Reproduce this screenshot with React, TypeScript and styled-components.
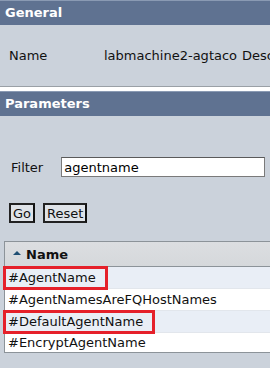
import React from "react";
import styled, { createGlobalStyle } from "styled-components";

const GlobalStyle = createGlobalStyle`
  html, body {
    margin: 0;
    padding: 0;
    background: #ffffff;
    overflow: hidden;
  }
  body {
    font-family: "DejaVu Sans", Verdana, sans-serif;
    font-size: 13px;
    color: #111;
  }
`;

const Page = styled.div`
  width: 270px;
  height: 368px;
  overflow: hidden;
  display: flex;
  flex-direction: column;
`;

const Panel = styled.section<{ $grow?: boolean }>`
  display: flex;
  flex-direction: column;
  background: #cbd2db;
  flex: ${p => (p.$grow ? "1" : "none")};
`;

const PanelHeader = styled.div`
  height: 25px;
  background: #5f7291;
  border-top: 1px solid #8a9ab3;
  box-sizing: border-box;
  color: #fff;
  font-weight: bold;
  font-size: 13px;
  line-height: 24px;
  padding-left: 5px;
`;

const GeneralBody = styled.div`
  height: 61px;
  border-bottom: 1px solid #9aa0a6;
  display: grid;
  grid-template-columns: 95px 138px 60px;
  align-items: center;
  padding-left: 9px;
  white-space: nowrap;
`;

const Gap = styled.div`
  height: 4px;
  background: #fff;
`;

const ParamsBody = styled.div`
  padding: 41px 0 0 4px;
  display: flex;
  flex-direction: column;
`;

const FilterRow = styled.div`
  display: flex;
  align-items: center;
  padding-left: 7px;
  gap: 18px;
`;

const Input = styled.input`
  width: 204px;
  height: 20px;
  box-sizing: border-box;
  border: 1px solid #7a7a7a;
  border-top-color: #5a5a5a;
  background: #fff;
  font-family: "DejaVu Sans", Verdana, sans-serif;
  font-size: 13px;
  padding: 0 2px;
  outline: none;
`;

const ButtonRow = styled.div`
  display: flex;
  gap: 8px;
  margin-top: 26px;
  padding-left: 5px;
`;

const Button = styled.button`
  height: 20px;
  box-sizing: border-box;
  border: 2px solid #222;
  border-right-color: #111;
  background: #dfe3e8;
  font-family: "DejaVu Sans", Verdana, sans-serif;
  font-size: 13px;
  padding: 0 2px;
  line-height: 15px;
  color: #111;
`;

const Table = styled.div`
  margin-top: 18px;
  width: 320px;
  border: 1px solid #8c9399;
  border-right: none;
  background: #fff;
`;

const HeadRow = styled.div`
  height: 24px;
  display: flex;
  align-items: center;
  gap: 5px;
  padding-left: 8px;
  background: linear-gradient(#dcdee1, #d5d8db);
  border-bottom: 1px solid #8c9399;
  font-weight: bold;
  font-size: 13px;
`;

const SortArrow = styled.span`
  width: 0;
  height: 0;
  border-left: 4px solid transparent;
  border-right: 4px solid transparent;
  border-bottom: 4px solid #1f4f73;
  margin-top: -2px;
`;

const Row = styled.div<{ $alt?: boolean }>`
  height: 21px;
  display: flex;
  align-items: center;
  background: ${p => (p.$alt ? "#e9eef6" : "#ffffff")};
  border-bottom: 1px solid #e2e6ec;
  &:last-child {
    border-bottom: none;
    height: 19px;
  }
`;

const Cell = styled.span<{ $mark?: boolean }>`
  display: inline-block;
  line-height: 20px;
  padding: 0 10px 0 3px;
  white-space: nowrap;
  outline: ${p => (p.$mark ? "3px solid #e5202a" : "none")};
  outline-offset: -1px;
`;

const rows = [
  { name: "#AgentName", mark: true },
  { name: "#AgentNamesAreFQHostNames", mark: false },
  { name: "#DefaultAgentName", mark: true },
  { name: "#EncryptAgentName", mark: false },
];

export default function App() {
  return (
    <Page>
      <GlobalStyle />
      <Panel>
        <PanelHeader>General</PanelHeader>
        <GeneralBody>
          <span>Name</span>
          <span>labmachine2-agtaco</span>
          <span>Description</span>
        </GeneralBody>
      </Panel>
      <Gap />
      <Panel $grow>
        <PanelHeader>Parameters</PanelHeader>
        <ParamsBody>
          <FilterRow>
            <label>Filter</label>
            <Input defaultValue="agentname" />
          </FilterRow>
          <ButtonRow>
            <Button>Go</Button>
            <Button>Reset</Button>
          </ButtonRow>
          <Table>
            <HeadRow>
              <SortArrow />
              Name
            </HeadRow>
            {rows.map((r, i) => (
              <Row key={r.name} $alt={i % 2 === 0}>
                <Cell $mark={r.mark}>{r.name}</Cell>
              </Row>
            ))}
          </Table>
        </ParamsBody>
      </Panel>
    </Page>
  );
}
